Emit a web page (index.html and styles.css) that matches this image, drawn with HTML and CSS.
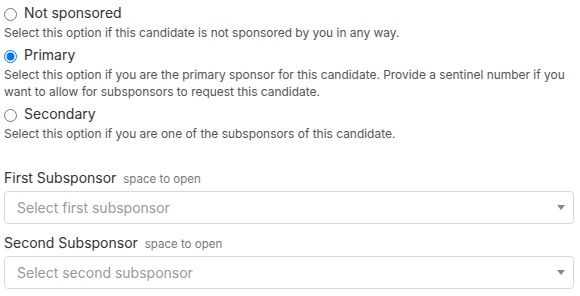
FILE: index.html
```html
<!DOCTYPE html>
<html>
<head>
<meta charset="utf-8">
<link rel="stylesheet" href="styles.css">
</head>
<body>
<div class="form">
  <div class="options">
    <label class="option">
      <input type="radio" name="sponsor" class="radio">
      <span class="option-label">Not sponsored</span>
    </label>
    <p class="desc">Select this option if this candidate is not sponsored by you in any way.</p>
    <label class="option">
      <input type="radio" name="sponsor" class="radio" checked>
      <span class="option-label">Primary</span>
    </label>
    <p class="desc">Select this option if you are the primary sponsor for this candidate. Provide a sentinel number if you want to allow for subsponsors to request this candidate.</p>
    <label class="option">
      <input type="radio" name="sponsor" class="radio">
      <span class="option-label">Secondary</span>
    </label>
    <p class="desc">Select this option if you are one of the subsponsors of this candidate.</p>
  </div>
  <div class="field first">
    <div class="field-label">First Subsponsor <span class="hint">space to open</span></div>
    <div class="select">
      <span class="placeholder">Select first subsponsor</span>
      <span class="arrow"></span>
    </div>
  </div>
  <div class="field">
    <div class="field-label">Second Subsponsor <span class="hint">space to open</span></div>
    <div class="select">
      <span class="placeholder">Select second subsponsor</span>
      <span class="arrow"></span>
    </div>
  </div>
</div>
</body>
</html>
```
FILE: styles.css
```css
* { box-sizing: border-box; }
body {
  margin: 0;
  background: #fff;
  font-family: Inter, "Noto Sans", sans-serif;
  color: #333;
}
.form {
  padding: 2px 6px 0 4px;
}
.options {
  display: flex;
  flex-direction: column;
}
.option {
  display: flex;
  align-items: center;
  gap: 7px;
  height: 21px;
}
.radio {
  width: 13px;
  height: 13px;
  margin: 3px 0 0 0;
  flex: none;
}
.option-label {
  font-size: 14px;
  color: #333;
}
.desc {
  margin: 0;
  font-size: 11.95px;
  line-height: 17px;
  color: #555;
  padding: 1px 0 3px;
}
.field.first { margin-top: 24px; }
.field + .field { margin-top: 10px; }
.field-label {
  font-size: 14px;
  color: #333;
  height: 22px;
}
.hint {
  font-size: 11.5px;
  color: #777;
  margin-left: 3px;
}
.select {
  height: 33px;
  border: 1px solid #d9d9d9;
  border-radius: 4px;
  display: flex;
  align-items: center;
  justify-content: space-between;
  padding: 0 8px 0 12px;
}
.placeholder {
  font-size: 14px;
  color: #999;
}
.arrow {
  width: 0;
  height: 0;
  border-left: 4px solid transparent;
  border-right: 4px solid transparent;
  border-top: 5px solid #888;
}
```
